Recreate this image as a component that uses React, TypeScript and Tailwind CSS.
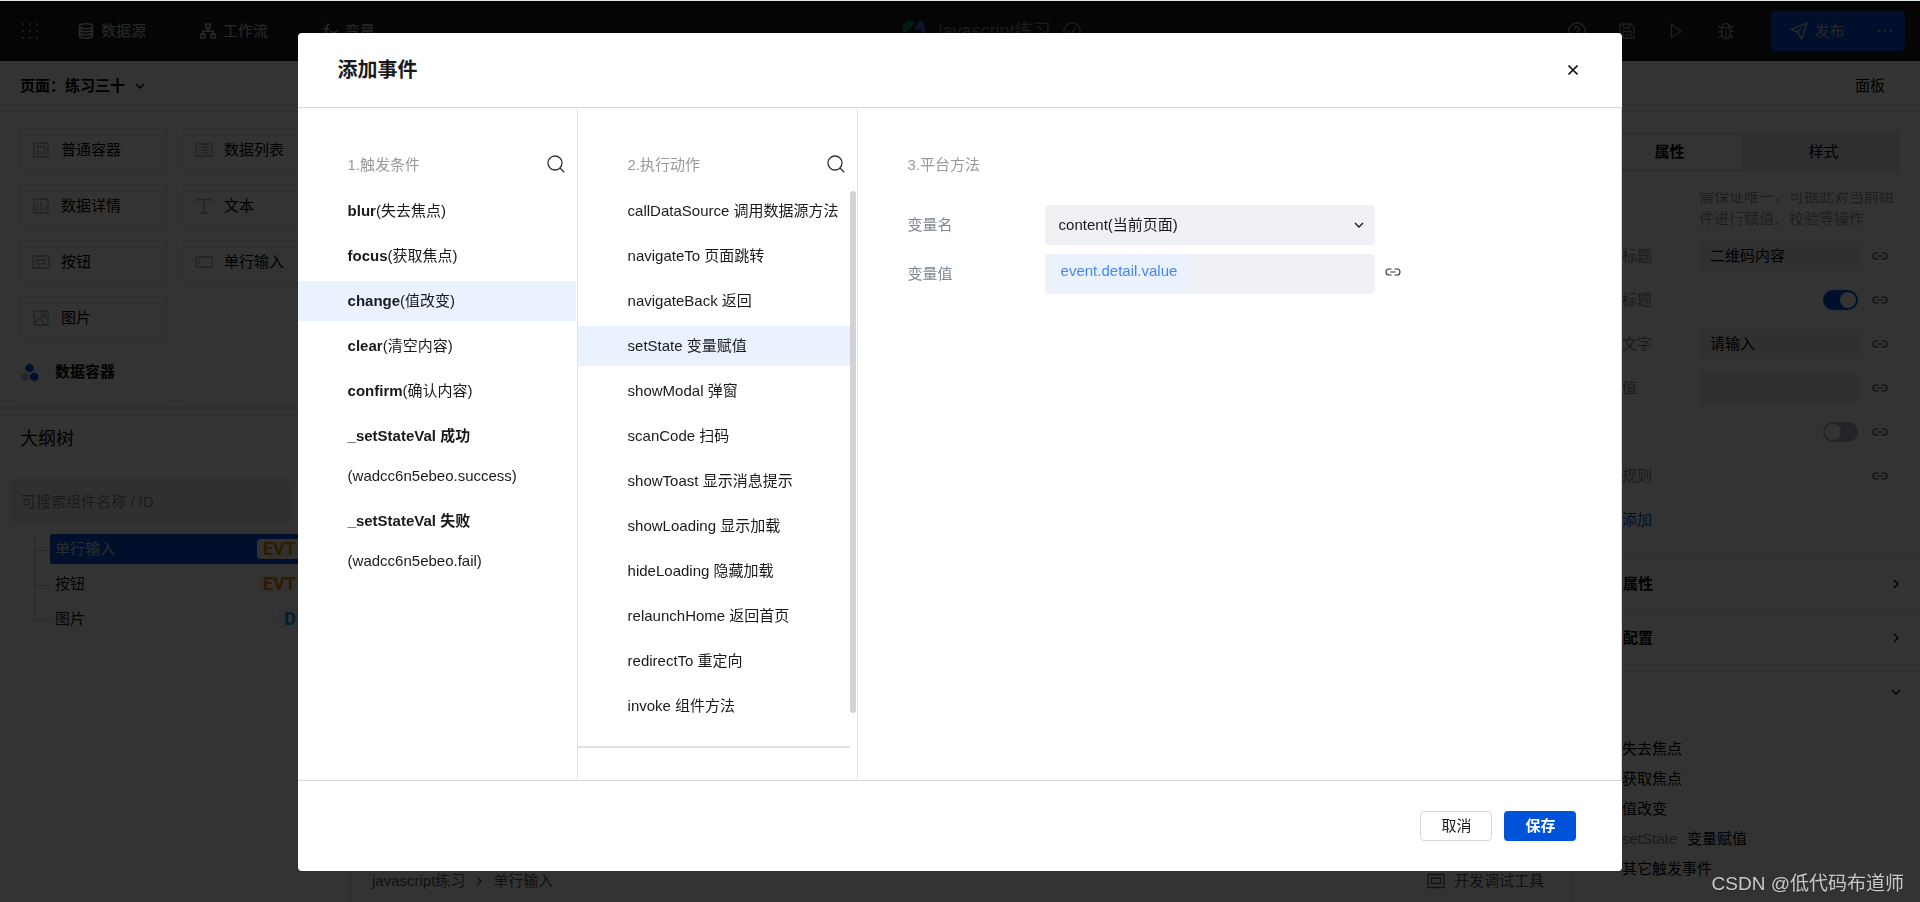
import { useState } from 'react';
import type { ReactNode } from 'react';

type IconProps = { className?: string };

const triggers = [
  { name: 'blur', desc: '(失去焦点)' },
  { name: 'focus', desc: '(获取焦点)' },
  { name: 'change', desc: '(值改变)' },
  { name: 'clear', desc: '(清空内容)' },
  { name: 'confirm', desc: '(确认内容)' },
  { name: '_setStateVal 成功', desc: '(wadcc6n5ebeo.success)', block: true },
  { name: '_setStateVal 失败', desc: '(wadcc6n5ebeo.fail)', block: true },
];

const actions = [
  'callDataSource 调用数据源方法',
  'navigateTo 页面跳转',
  'navigateBack 返回',
  'setState 变量赋值',
  'showModal 弹窗',
  'scanCode 扫码',
  'showToast 显示消息提示',
  'showLoading 显示加载',
  'hideLoading 隐藏加载',
  'relaunchHome 返回首页',
  'redirectTo 重定向',
  'invoke 组件方法',
];

/* ---------- icons ---------- */

function Svg({ className, children, box = '0 0 16 16' }: IconProps & { children: ReactNode; box?: string }) {
  return (
    <svg className={className} viewBox={box} fill="none" stroke="currentColor" strokeWidth="1.3" aria-hidden="true">
      {children}
    </svg>
  );
}

const SearchIcon = ({ className }: IconProps) => (
  <Svg className={className} box="0 0 18 18">
    <circle cx="8" cy="8" r="7" />
    <path d="M13 13l4.200 4.200" />
  </Svg>
);

const LinkIcon = ({ className }: IconProps) => (
  <Svg className={className} box="0 0 16 8">
    <path d="M6.500 1H4a3 3 0 0 0 0 6h2.500M9.500 1H12a3 3 0 0 1 0 6H9.500M5.500 4h5" strokeWidth="1.100" />
  </Svg>
);

const ChevronDown = ({ className }: IconProps) => (
  <Svg className={className} box="0 0 10 10">
    <path d="M1 3l4 4 4-4" strokeWidth="1.400" />
  </Svg>
);

const ChevronRight = ({ className }: IconProps) => (
  <Svg className={className} box="0 0 10 10">
    <path d="M3 1l4 4-4 4" strokeWidth="1.400" />
  </Svg>
);

const DatabaseIcon = ({ className }: IconProps) => (
  <Svg className={className}>
    <g strokeWidth="1.6">
      <ellipse cx="8" cy="3.2" rx="6.5" ry="2.4" />
      <path d="M1.5 3.2v9.6c0 1.3 2.9 2.4 6.5 2.4s6.500-1.100 6.500-2.400V3.200M1.500 6.400c0 1.300 2.900 2.400 6.500 2.400s6.500-1.100 6.500-2.400M1.500 9.600c0 1.300 2.900 2.400 6.500 2.400s6.500-1.100 6.500-2.400" />
    </g>
  </Svg>
);

const FlowIcon = ({ className }: IconProps) => (
  <Svg className={className}>
    <path d="M6 1h4v4H6zM1 11h4v4H1zM11 11h4v4h-4zM8 5v3M3 11V8h10v3" strokeWidth="1.6" />
  </Svg>
);

const FxIcon = ({ className }: IconProps) => (
  <Svg className={className}>
    <path d="M8 1.500C5.500.5 5 2.500 4.700 5L4 11c-.3 2.500-1.200 4-3.500 3.500M1.500 6h6M8.500 8c2.500-1 3 5.500 5.500 5M15.500 7.500c-2 0-4 5.500-6.500 5.500" strokeWidth="1.5" />
  </Svg>
);

const componentIcons = {
  container: (
    <Svg className="size-4">
      <path d="M1 1h14v14H1zM4.500 4.500h7v7h-7z" />
    </Svg>
  ),
  list: (
    <Svg className="h-4 w-[18px]" box="0 0 18 16">
      <path d="M1 2h16v12H1zM4 5h1.500M7 5h7M4 8h1.500M7 8h7M4 11h1.500M7 11h7" />
    </Svg>
  ),
  detail: (
    <Svg className="size-4">
      <path d="M1 1h14v14H1zM4 7v6M8 4v9M12 9v4" />
    </Svg>
  ),
  text: (
    <Svg className="size-4">
      <path d="M1 4V1.500h14V4M8 1.500v13M4.500 15h7" />
    </Svg>
  ),
  button: (
    <Svg className="h-4 w-[18px]" box="0 0 18 16">
      <path d="M1 2h16v12H1zM5 6h8v4H5z" />
    </Svg>
  ),
  input: (
    <Svg className="h-4 w-[18px]" box="0 0 18 16">
      <path d="M1 3h16v10H1zM4.500 5.500v5" />
    </Svg>
  ),
  image: (
    <Svg className="size-4">
      <path d="M1 1h14v14H1zM1.500 13l4.500-5 6 6.500" />
      <circle cx="10.500" cy="5.500" r="2" />
    </Svg>
  ),
};

const components = [
  { label: '普通容器', icon: componentIcons.container },
  { label: '数据列表', icon: componentIcons.list },
  { label: '数据详情', icon: componentIcons.detail },
  { label: '文本', icon: componentIcons.text },
  { label: '按钮', icon: componentIcons.button },
  { label: '单行输入', icon: componentIcons.input },
  { label: '图片', icon: componentIcons.image },
];

/* ---------- editor behind the dialog ---------- */

function TopBar() {
  return (
    <header className="flex h-[60px] shrink-0 items-center bg-[#1a1a1a] pr-[15px] pl-[22px] text-[#ccc]">
      <div className="flex flex-1 items-center">
        <svg className="size-4 text-[#999]" viewBox="0 0 16 16" fill="currentColor" aria-hidden="true">
          {[1, 8, 15].map((y) => [1, 8, 15].map((x) => <circle key={`${x}-${y}`} cx={x} cy={y} r="1.200" />))}
        </svg>
        <nav className="flex items-center">
          <a href="#data" className="ml-10 flex items-center gap-[7px]">
            <DatabaseIcon className="size-4" />
            数据源
          </a>
          <a href="#flow" className="ml-[54px] flex items-center gap-[7px]">
            <FlowIcon className="size-4" />
            工作流
          </a>
          <a href="#vars" className="ml-[54px] flex items-center gap-[7px]">
            <FxIcon className="size-4" />
            变量
          </a>
        </nav>
      </div>
      <div className="flex items-center gap-3 pl-14 text-lg text-[#888]">
        <svg className="size-6" viewBox="0 0 24 24" aria-hidden="true">
          <path d="M1 6l6-5 7 3-13 11z" fill="#0b8a5a" />
          <path d="M12 12l6-11 5 5v9l-6-5z" fill="#3b6be0" />
        </svg>
        <span>javascript练习</span>
        <Svg className="size-[18px]">
          <circle cx="8" cy="8" r="7.200" />
          <path d="M4.500 8l2.500 2.500 4.500-5" />
        </Svg>
      </div>
      <div className="flex flex-1 items-center justify-end">
        <div className="flex items-center gap-[33px] text-[#999]">
          <button type="button" aria-label="帮助">
            <Svg className="size-[18px]">
              <circle cx="8" cy="8" r="7.200" />
              <path d="M5.800 6.300c0-3 4.400-3 4.400-.3C10.200 7.500 8 7.800 8 9.500M8 11v1.300" />
            </Svg>
          </button>
          <button type="button" aria-label="保存">
            <Svg className="size-4">
              <path d="M1 1h10.500L15 4.500V15H1zM4.500 1v4h6V1M4 15V8.500h8V15M6 12h4" />
            </Svg>
          </button>
          <button type="button" aria-label="预览">
            <Svg className="size-4">
              <path d="M3.500 1.500v13L13 8z" />
            </Svg>
          </button>
          <button type="button" aria-label="调试">
            <Svg className="size-[18px]">
              <path d="M5 5V3.500C5 .5 11 .5 11 3.500V5M4.500 5h7v6c0 5-7 5-7 0zM8 7v7.500M1 8.500h3.500M11.500 8.500H15M1.500 3.500l3 2M14.500 3.500l-3 2M1.500 14l3-2.500M14.500 14l-3-2.500" />
            </Svg>
          </button>
        </div>
        <div className="ml-9 flex h-10 items-center overflow-hidden rounded bg-[#0052d9]">
          <button type="button" className="flex h-full w-[94px] items-center justify-center gap-1.5 border-r border-[#2060d0]">
            <Svg className="size-[18px]">
              <path d="M1 6.500L15 1l-4.500 14L6.500 9zM6.500 9l3-3" />
            </Svg>
            发布
          </button>
          <button type="button" aria-label="更多" className="flex h-full w-10 items-center justify-center text-[#aaa]">
            <svg className="h-1 w-4" viewBox="0 0 16 4" fill="currentColor" aria-hidden="true">
              <circle cx="2" cy="2" r="1.300" />
              <circle cx="8" cy="2" r="1.300" />
              <circle cx="14" cy="2" r="1.300" />
            </svg>
          </button>
        </div>
      </div>
    </header>
  );
}

function LeftPanel() {
  return (
    <aside className="flex w-[350px] shrink-0 flex-col border-r border-[#e8eaee]">
      <div className="h-[297px] shrink-0 overflow-hidden border-b-2 border-[#e3e6eb] pt-4 pr-[18px] pl-5">
        <div className="grid grid-cols-2 gap-x-[15px] gap-y-3">
          {components.map((c) => (
            <div key={c.label} className="flex h-11 items-center gap-[11px] rounded border border-[#e8eaee] px-[11px]">
              <span className="flex w-[18px] justify-center text-[#a0a8b8]">{c.icon}</span>
              {c.label}
            </div>
          ))}
        </div>
        <div className="mt-5 flex items-center gap-4 font-bold">
          <svg className="size-[19px]" viewBox="0 0 18 18" aria-hidden="true">
            <path d="M9 .5l4 2.300v4L9 9.100 5 6.800v-4z" fill="#0052d9" />
            <path d="M13.500 8.700l3.800 2.200v4.400l-3.800 2.200-3.800-2.200v-4.400z" fill="#0052d9" />
            <path d="M4.500 8.700l3.800 2.200v4.400l-3.800 2.200-3.800-2.200v-4.400z" fill="#b4c0dc" />
          </svg>
          数据容器
        </div>
        <div className="mt-5 grid grid-cols-2 gap-x-[15px]">
          <div className="h-11 rounded border border-[#e8eaee]" />
          <div className="h-11 rounded border border-[#e8eaee]" />
        </div>
      </div>
      <h2 className="px-5 pt-4 text-lg">大纲树</h2>
      <input
        type="text"
        aria-label="搜索组件"
        placeholder="可搜索组件名称 / ID"
        className="mx-2.5 mt-[26px] mb-[11px] h-11 w-[280px] shrink-0 rounded bg-[#f0f1f5] px-[11px] placeholder:text-[#888]"
      />
      <ul className="ml-[34px] flex flex-col">
        <TreeRow label="单行输入" tag="EVT" selected />
        <TreeRow label="按钮" tag="EVT" />
        <TreeRow label="图片" tag="D" last />
      </ul>
    </aside>
  );
}

function TreeRow({ label, tag, selected, last }: { label: string; tag: string; selected?: boolean; last?: boolean }) {
  return (
    <li className="flex h-[35px] w-[266px] items-start">
      <div className={last ? 'h-[17px] w-4 shrink-0 border-b border-l border-[#c5c8ce]' : 'h-full w-4 shrink-0 border-l border-[#c5c8ce]'}>
        {!last && <div className="h-[17px] border-b border-[#c5c8ce]" />}
      </div>
      <div
        className={
          selected
            ? 'flex h-[30px] flex-1 items-center justify-between rounded-xs bg-[#0052d9] pl-[5px] text-[#ddd]'
            : 'flex h-[30px] flex-1 items-center justify-between pl-[5px] text-[#222]'
        }
      >
        {label}
        <span
          className={
            tag === 'D'
              ? 'rounded bg-[#eef4fa] pl-1.5 pr-1 font-[Roboto] text-lg leading-5 font-bold text-[#0594d0]'
              : selected
                ? 'rounded bg-[#fdf6ee] pl-1.5 pr-1 font-[Roboto] text-lg leading-5 font-bold text-[#e08a00]'
                : 'rounded bg-[#fdf9f4] pl-1.5 pr-1 font-[Roboto] text-lg leading-5 font-bold text-[#e08a00]'
          }
        >
          {tag}
        </span>
      </div>
    </li>
  );
}

function PropRow({ label, children }: { label: string; children?: ReactNode }) {
  return (
    <div className="flex h-11 items-center pr-8 pl-[49px]">
      <span className="w-[77px] text-[#808792]">{label}</span>
      <div className="flex flex-1 justify-end">{children}</div>
      <button type="button" aria-label="绑定数据" className="ml-3.5 text-[#333]">
        <LinkIcon className="h-2 w-4" />
      </button>
    </div>
  );
}

const fieldCls = 'h-[30px] w-full min-w-0 rounded bg-[#f0f1f5] px-[11px] pb-1 text-black';
const toggleCls =
  "h-5 w-[35px] appearance-none rounded-full bg-[#b0b5c6] p-0.5 before:block before:size-4 before:rounded-full before:bg-white before:content-[''] checked:bg-[#0052d9] checked:before:ml-[15px]";

function RightPanel() {
  return (
    <aside className="flex w-[348px] shrink-0 flex-col border-l border-[#e8eaee]">
      <div className="mx-[19px] my-5 flex h-10 shrink-0 gap-[7px] rounded-md bg-[#e4e9f0] px-1 py-[3px]">
        <button type="button" className="flex-1 rounded-sm bg-white font-bold shadow-sm">
          属性
        </button>
        <button type="button" className="flex-1">
          样式
        </button>
      </div>
      {/* the panel is scrolled, so the first help line is cut at its top edge */}
      <div className="flex h-[38px] shrink-0 flex-col justify-end overflow-hidden pl-[126px]">
        <p className="w-[195px] leading-[22px] text-[#999]">需保证唯一，可据此对当前组件进行赋值、校验等操作</p>
      </div>
      <div className="pt-1">
        <PropRow label="标题">
          <input type="text" aria-label="标题" defaultValue="二维码内容" className={fieldCls} />
        </PropRow>
        <PropRow label="标题">
          <input type="checkbox" aria-label="显示标题" defaultChecked className={toggleCls} />
        </PropRow>
        <PropRow label="文字">
          <input type="text" aria-label="提示文字" defaultValue="请输入" className={fieldCls} />
        </PropRow>
        <PropRow label="值">
          <input type="text" aria-label="输入值" className={fieldCls} />
        </PropRow>
        <PropRow label="">
          <input type="checkbox" aria-label="禁用" className={toggleCls} />
        </PropRow>
        <PropRow label="规则" />
        <div className="flex h-11 items-center pl-[49px]">
          <a href="#add" className="text-[#0052d9]">
            添加
          </a>
        </div>
      </div>
      <div className="mt-3.5 flex h-[54px] shrink-0 items-center justify-between border-t border-[#e3e6eb] pr-[19px] pl-[50px] font-bold">
        属性
        <ChevronRight className="size-2.5" />
      </div>
      <div className="flex h-[54px] shrink-0 items-center justify-between border-t border-[#e3e6eb] pr-[19px] pl-[50px] font-bold">
        配置
        <ChevronRight className="size-2.5" />
      </div>
      <div className="flex h-[54px] shrink-0 items-center justify-end border-t border-[#e3e6eb] pr-[19px]">
        <ChevronDown className="size-2.5" />
      </div>
      <ul className="pt-4 pl-[49px] leading-[30px]">
        <li>失去焦点</li>
        <li>获取焦点</li>
        <li>值改变</li>
        <li>
          <span className="mr-2.5 text-[#888]">setState</span>变量赋值
        </li>
        <li>其它触发事件</li>
      </ul>
    </aside>
  );
}

function Editor() {
  return (
    <div className="flex h-screen flex-col overflow-hidden border-t border-[#dfe5e2] bg-white" aria-hidden="true">
      <TopBar />
      <div className="flex h-[51px] shrink-0 items-center justify-between border-b border-[#e3e6eb] pr-[35px] pl-5">
        <button type="button" className="flex items-center font-bold">
          页面：练习三十
          <ChevronDown className="ml-2.5 size-2.5" />
        </button>
        <button type="button">面板</button>
      </div>
      <div className="flex min-h-0 flex-1">
        <LeftPanel />
        <main className="flex min-w-0 flex-1 flex-col justify-end bg-[#f7f7f7]">
          <div className="flex h-[42px] shrink-0 items-center justify-between bg-white pr-7 pl-[22px] text-[#555]">
            <div className="flex items-center gap-[9px]">
              javascript练习
              <ChevronRight className="size-2.5" />
              单行输入
            </div>
            <button type="button" className="flex items-center gap-[9px]">
              <Svg className="h-4 w-[18px]" box="0 0 18 16">
                <path d="M1 1.500h16v13H1zM4.500 5h9v5.500h-9z" />
              </Svg>
              开发调试工具
            </button>
          </div>
        </main>
        <RightPanel />
      </div>
    </div>
  );
}

/* ---------- dialog ---------- */

function ColumnTitle({ children, search }: { children: string; search?: boolean }) {
  return (
    <div className="flex h-[83px] items-end justify-between pr-3 pb-3.5 pl-[50px]">
      <h3 className="leading-6 text-[#999]">{children}</h3>
      {search && (
        <button type="button" aria-label="搜索" className="mb-1 text-[#333]">
          <SearchIcon className="size-[18px]" />
        </button>
      )}
    </div>
  );
}

function EventDialog() {
  const [trigger, setTrigger] = useState('change');
  const [action, setAction] = useState('setState 变量赋值');

  return (
    <section role="dialog" aria-label="添加事件" className="flex w-[69%] flex-col rounded bg-white text-[#1a1a1a]">
      <header className="flex h-[75px] items-center justify-between border-b border-[#d5d7e0] pr-11 pl-10">
        <h1 className="text-xl font-bold">添加事件</h1>
        <button type="button" aria-label="关闭">
          <Svg className="size-2.5" box="0 0 10 10">
            <path d="M.5.5l9 9M9.500.5l-9 9" strokeWidth="1.600" />
          </Svg>
        </button>
      </header>

      <div className="flex border-r border-[#d5d7e0]">
        <div className="w-[280px] shrink-0 border-r border-[#dfe2e8]">
          <ColumnTitle search>1.触发条件</ColumnTitle>
          <ul className="flex flex-col gap-[5px] pr-px">
            {triggers.map((t) => (
              <li key={t.name}>
                <button
                  type="button"
                  onClick={() => setTrigger(t.name)}
                  className={
                    trigger === t.name
                      ? 'block w-full bg-[#eaf1ff] pl-[50px] text-left leading-10'
                      : 'block w-full pl-[50px] text-left leading-10'
                  }
                >
                  <b>{t.name}</b>
                  <span className={t.block ? 'block' : 'inline'}>{t.desc}</span>
                </button>
              </li>
            ))}
          </ul>
        </div>

        <div className="w-[280px] shrink-0 border-r border-[#dfe2e8]">
          <ColumnTitle search>2.执行动作</ColumnTitle>
          <div className="flex">
            <ul className="flex flex-1 flex-col gap-[5px] border-b-2 border-[#dfe2e8] pb-5">
              {actions.map((a) => (
                <li key={a}>
                  <button
                    type="button"
                    onClick={() => setAction(a)}
                    className={
                      action === a
                        ? 'block w-full bg-[#eaf1ff] pl-[50px] text-left leading-10 whitespace-nowrap'
                        : 'block w-full pl-[50px] text-left leading-10 whitespace-nowrap'
                    }
                  >
                    {a}
                  </button>
                </li>
              ))}
            </ul>
            <div className="mr-px h-[522px] w-1.5 rounded-full bg-[#d2d2d2]" />
          </div>
          <div className="h-8" />
        </div>

        <div className="flex-1">
          <ColumnTitle>3.平台方法</ColumnTitle>
          <div className="flex flex-col gap-[9px] pt-3.5 pl-[50px]">
            <div className="flex items-center">
              <label htmlFor="var-name" className="w-[137px] text-[#808792]">
                变量名
              </label>
              <div className="grid w-[330px] items-center">
                <select
                  id="var-name"
                  className="col-start-1 row-start-1 h-10 appearance-none rounded bg-[#f0f1f5] px-3.5"
                >
                  <option>content(当前页面)</option>
                </select>
                <ChevronDown className="pointer-events-none col-start-1 row-start-1 mr-[11px] size-2.5 justify-self-end" />
              </div>
            </div>
            <div className="flex items-center">
              <label htmlFor="var-value" className="w-[137px] text-[#808792]">
                变量值
              </label>
              <div className="flex h-10 w-[330px] items-start rounded bg-[#f0f1f5] pl-[5px]">
                <span className="rounded-b bg-[#eaf1ff] px-[11px] pb-0.5 leading-[33px] text-[#4787f0]">event.detail.value</span>
                <input id="var-value" type="text" className="h-full min-w-0 flex-1" />
              </div>
              <button type="button" aria-label="绑定数据" className="mb-1 ml-2.5 text-[#333]">
                <LinkIcon className="h-2 w-4" />
              </button>
            </div>
          </div>
        </div>
      </div>

      <footer className="flex h-[91px] items-center justify-end gap-3 border-t border-[#d5d7e0] pr-[46px]">
        <button type="button" className="h-[30px] w-[72px] rounded-sm border border-[#d5d7e0]">
          取消
        </button>
        <button type="button" className="h-[30px] w-[72px] rounded-sm bg-[#0052d9] font-bold text-white">
          保存
        </button>
      </footer>
    </section>
  );
}

export default function App() {
  return (
    <div className="font-['Liberation_Sans','Noto_Sans_CJK_SC',sans-serif] text-[15px] leading-6 text-black">
      <Editor />
      <div className="fixed inset-0 top-px flex items-center justify-center bg-black/80">
        <EventDialog />
      </div>
      <p className="fixed right-4 bottom-1.5 text-[19px] text-[#c8c8c8] text-shadow-sm">CSDN @低代码布道师</p>
    </div>
  );
}
